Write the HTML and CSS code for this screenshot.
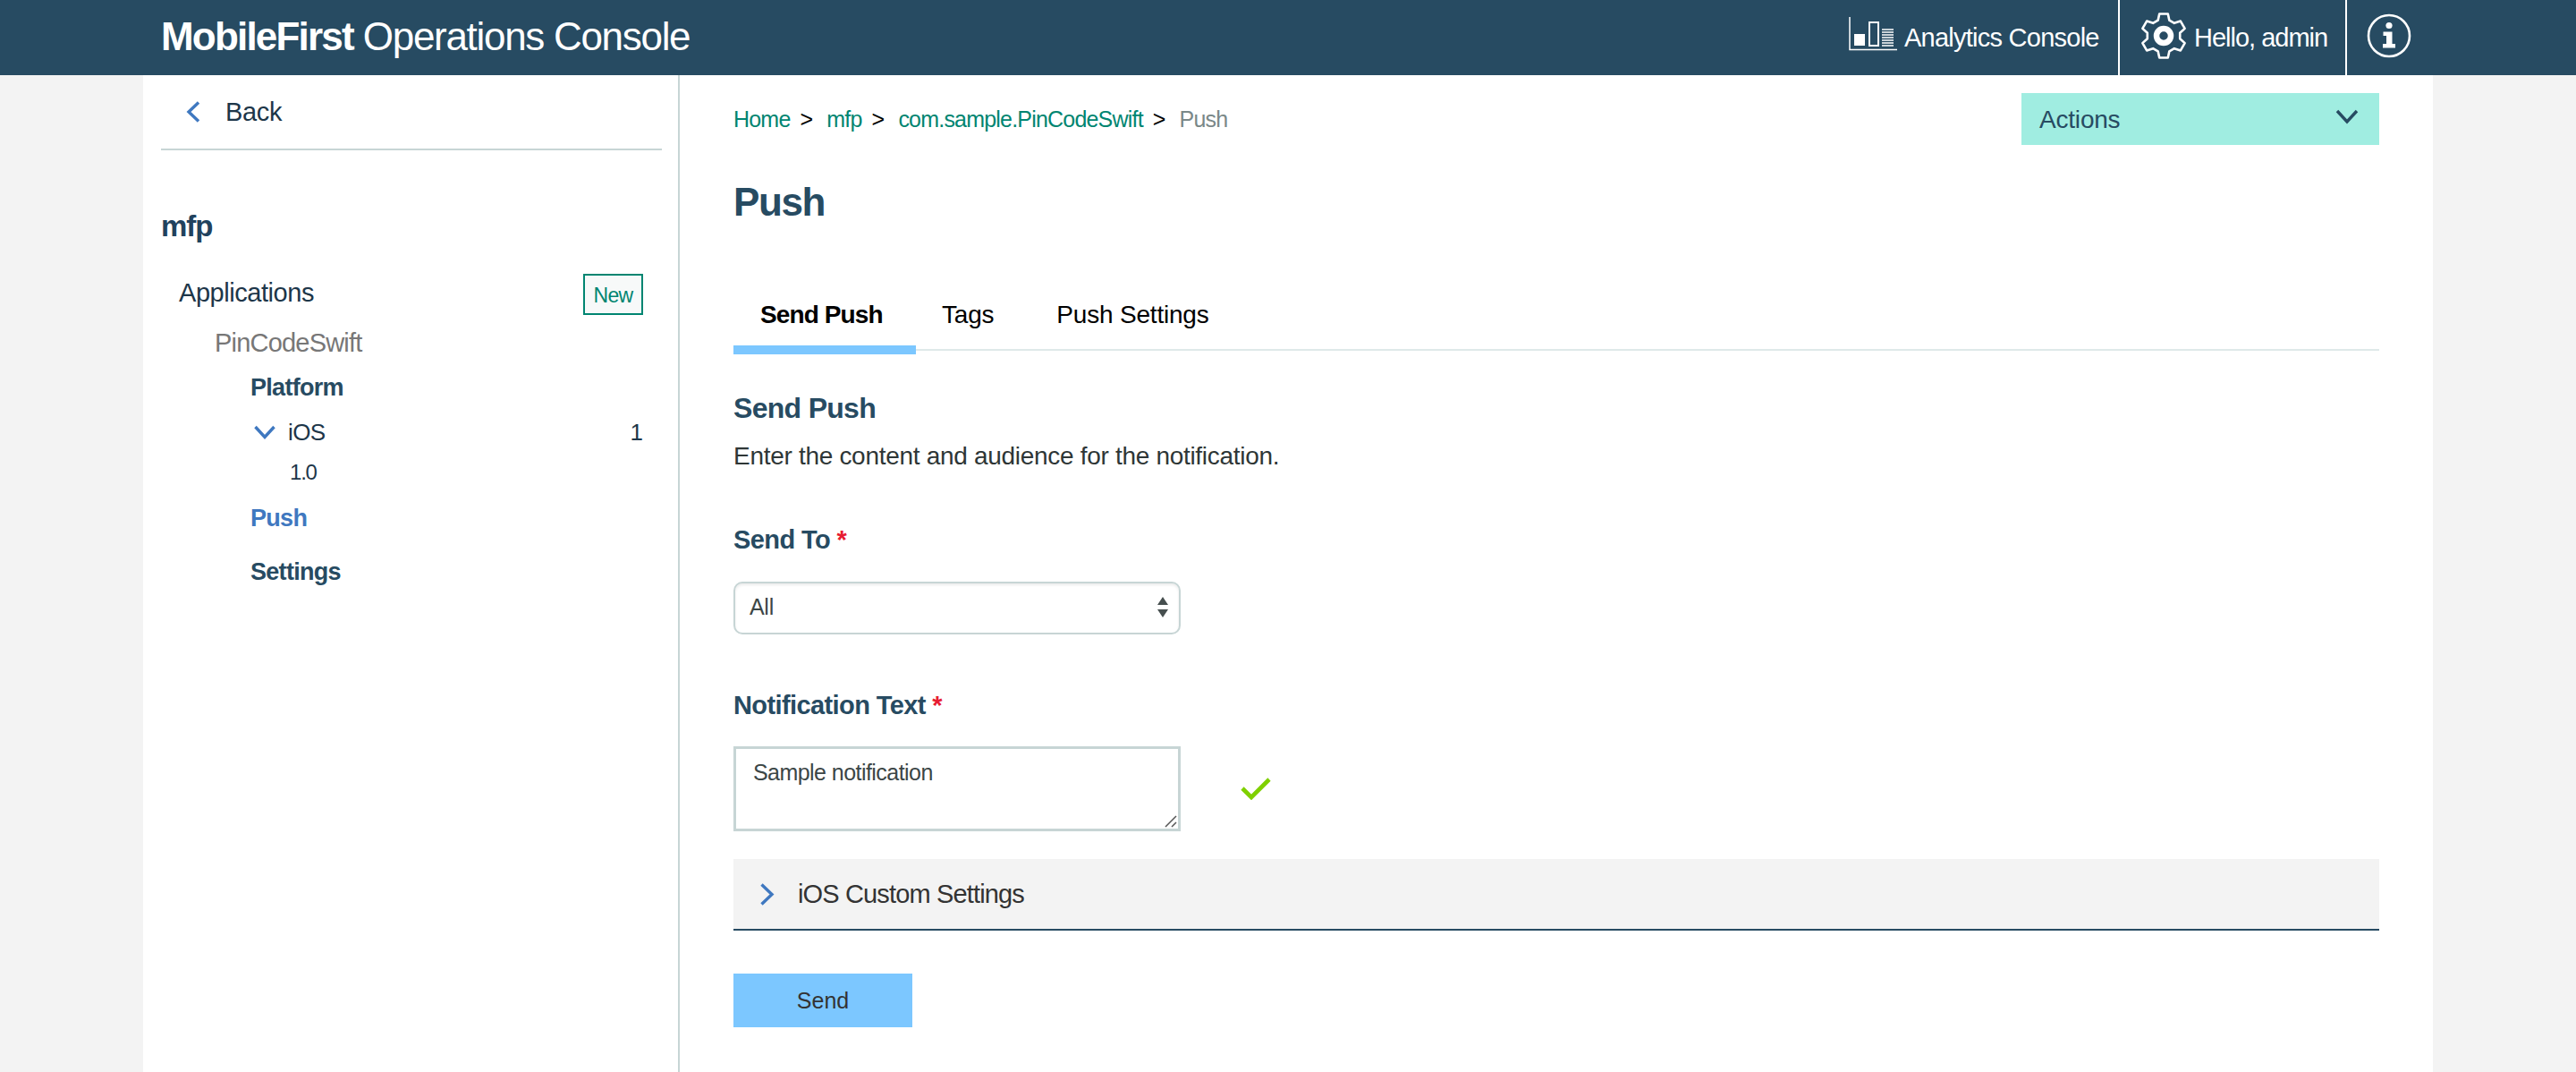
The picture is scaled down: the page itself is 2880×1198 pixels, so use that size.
FILE: index.html
```html
<!DOCTYPE html>
<html lang="en">
<head>
    <meta charset="UTF-8">
    <title>MobileFirst Operations Console</title>
    <link rel="stylesheet" href="styles.css">
</head>
<body>
    <header class="top-bar">
        <div class="brand"><b>MobileFirst</b> Operations Console</div>
        <nav class="top-nav">
            <div class="nav-item nav-analytics">
                <svg class="icon-analytics" width="54" height="38" viewBox="0 0 54 38">
                    <path d="M1 0V36.5H54" fill="none" stroke="#fff" stroke-width="1.5"/>
                    <rect x="6" y="19" width="12" height="13" fill="#fff"/>
                    <rect x="23" y="6" width="10" height="26" fill="none" stroke="#fff" stroke-width="2"/>
                    <path d="M37 14H50M37 17H50M37 20H50M37 23H50M37 26H50M37 29H50M37 32H50" stroke="#fff" stroke-width="1.5"/>
                </svg>
                <span>Analytics Console</span>
            </div>
            <div class="nav-item nav-user">
                <svg class="icon-raised" width="52" height="54" viewBox="0 0 52 54">
                    <polygon fill="none" stroke="#fff" stroke-width="2.6" stroke-linejoin="round" points="19.67,9.61 21.23,2.46 30.77,2.46 32.33,9.61 37.9,12.83 44.87,10.6 49.64,18.86 44.22,23.79 44.22,30.21 49.64,35.14 44.87,43.4 37.9,41.17 32.33,44.39 30.77,51.54 21.23,51.54 19.67,44.39 14.1,41.17 7.13,43.4 2.36,35.14 7.78,30.21 7.78,23.79 2.36,18.86 7.13,10.6 14.1,12.83"/>
                    <circle cx="26" cy="27" r="8" fill="none" stroke="#fff" stroke-width="6.5"/>
                </svg>
                <span>Hello, admin</span>
            </div>
            <div class="nav-item nav-info">
                <svg class="icon-raised" width="50" height="50" viewBox="0 0 50 50">
                    <circle cx="25" cy="25" r="23" fill="none" stroke="#fff" stroke-width="2.6"/>
                    <circle cx="25" cy="13.5" r="3.6" fill="#fff"/>
                    <path d="M18.5 20.5H28.5V34H32V38.5H18V34H22V25H18.5Z" fill="#fff"/>
                </svg>
            </div>
        </nav>
    </header>

    <div class="page">
        <aside class="sidebar">
            <div class="back-row">
                <svg width="16" height="24" viewBox="0 0 16 24">
                    <path d="M14 1.5L3 12L14 22.5" fill="none" stroke="#3f78c0" stroke-width="3.4"/>
                </svg>
                <span>Back</span>
            </div>
            <div class="project-name">mfp</div>
            <div class="apps-row">
                <span class="apps-label">Applications</span>
                <span class="new-btn">New</span>
            </div>
            <div class="tree-app">PinCodeSwift</div>
            <div class="tree-link tree-platform">Platform</div>
            <div class="tree-os">
                <svg width="24" height="16" viewBox="0 0 24 16">
                    <path d="M1.5 2L12 13.5L22.5 2" fill="none" stroke="#3f78c0" stroke-width="3.4"/>
                </svg>
                <span class="os-name">iOS</span>
                <span class="os-count">1</span>
            </div>
            <div class="tree-version">1.0</div>
            <div class="tree-link tree-push">Push</div>
            <div class="tree-link tree-settings">Settings</div>
        </aside>

        <main class="content">
            <div class="crumb-row">
                <div class="crumbs">
                    <a class="crumb-home">Home</a><span class="crumb-sep">&gt;</span>
                    <a class="crumb-mfp">mfp</a><span class="crumb-sep">&gt;</span>
                    <a class="crumb-app">com.sample.PinCodeSwift</a><span class="crumb-sep">&gt;</span>
                    <span class="crumb-current">Push</span>
                </div>
                <div class="actions">
                    <span class="actions-label">Actions</span>
                    <svg width="26" height="17" viewBox="0 0 26 17">
                        <path d="M2 2L13 14L24 2" fill="none" stroke="#274b62" stroke-width="3.4"/>
                    </svg>
                </div>
            </div>

            <h1 class="page-title">Push</h1>

            <div class="tabs">
                <div class="tab tab-active">Send Push</div>
                <div class="tab tab-tags">Tags</div>
                <div class="tab tab-settings">Push Settings</div>
            </div>

            <h2 class="section-title">Send Push</h2>
            <p class="section-text">Enter the content and audience for the notification.</p>

            <label class="field-label label-send">Send To <span class="req">*</span></label>
            <div class="select-box">
                <span>All</span>
                <svg width="12" height="23" viewBox="0 0 12 23">
                    <path d="M6 0L12 9H0ZM0 14H12L6 23Z" fill="#464f4f"/>
                </svg>
            </div>

            <label class="field-label label-text">Notification Text <span class="req">*</span></label>
            <div class="text-row">
                <div class="text-wrap">
                    <textarea class="text-box">Sample notification</textarea>
                    <svg class="grip" width="14" height="14" viewBox="0 0 14 14">
                        <path d="M1 13L13 1M8 13L13 8" fill="none" stroke="#555" stroke-width="1.5"/>
                    </svg>
                </div>
                <svg class="check" width="34" height="25" viewBox="0 0 34 25">
                    <path d="M2 12L12 22L32 2" fill="none" stroke="#7fd000" stroke-width="4.6"/>
                </svg>
            </div>

            <div class="accordion">
                <svg width="17" height="25" viewBox="0 0 17 25">
                    <path d="M2.5 1.5L14 12.5L2.5 23.5" fill="none" stroke="#3f78c0" stroke-width="3.4"/>
                </svg>
                <span>iOS Custom Settings</span>
            </div>

            <button class="send-btn">Send</button>
        </main>
    </div>
</body>
</html>
```

FILE: styles.css
```css
html, body {
    height: 100%;
}
body {
    margin: 0;
    background: #f3f3f3;
    font-family: "Liberation Sans", Arial, sans-serif;
    overflow: hidden;
}
svg {
    display: block;
    flex-shrink: 0;
}

/* top bar */
.top-bar {
    display: flex;
    align-items: center;
    height: 84px;
    padding-left: 180px;
    background: #274b62;
    color: #fff;
}
.brand {
    padding-bottom: 3px;
    font-size: 44px;
    letter-spacing: -1.3px;
}
.brand b {
    letter-spacing: -1.8px;
}
.top-nav {
    display: flex;
    height: 84px;
    margin-left: auto;
    font-size: 29px;
}
.nav-item {
    display: flex;
    align-items: center;
}
.nav-analytics {
    gap: 8px;
    width: 301px;
    letter-spacing: -0.75px;
}
.nav-user {
    gap: 8px;
    width: 254px;
    padding-left: 23px;
    box-sizing: border-box;
    border-left: 2px solid #fff;
    letter-spacing: -1px;
}
.nav-info {
    width: 258px;
    padding-left: 22px;
    box-sizing: border-box;
    border-left: 2px solid #fff;
}
.icon-analytics {
    margin-bottom: 8px;
}
.icon-raised {
    margin-bottom: 5px;
}

/* page */
.page {
    display: flex;
    width: 2560px;
    height: 1114px;
    margin: 0 auto;
    background: #fff;
}

/* sidebar */
.sidebar {
    width: 600px;
    box-sizing: border-box;
    padding: 0 18px 0 20px;
    border-right: 2px solid #c7d5d5;
    color: #1d3649;
    font-size: 29px;
}
.back-row {
    display: flex;
    align-items: center;
    gap: 28px;
    height: 82px;
    padding-left: 28px;
    border-bottom: 2px solid #c7d5d5;
    font-size: 29px;
    letter-spacing: -0.3px;
}
.project-name {
    margin-top: 65px;
    font-size: 33px;
    line-height: 40px;
    font-weight: bold;
    letter-spacing: -1px;
    color: #21425e;
}
.apps-row {
    display: flex;
    align-items: center;
    justify-content: space-between;
    height: 46px;
    margin-top: 33px;
    padding: 0 21px 0 20px;
    letter-spacing: -0.45px;
}
.apps-label {
    margin-bottom: 4px;
}
.new-btn {
    width: 67px;
    height: 46px;
    box-sizing: border-box;
    border: 2px solid #008571;
    background: #f7f9f9;
    color: #008571;
    font-size: 23px;
    line-height: 44px;
    letter-spacing: -0.6px;
    text-align: center;
}
.tree-app {
    margin-top: 11px;
    padding-left: 60px;
    line-height: 40px;
    color: #777;
    letter-spacing: -0.8px;
}
.tree-link {
    padding-left: 100px;
    font-size: 27px;
    line-height: 40px;
    font-weight: bold;
    letter-spacing: -0.7px;
    color: #274b62;
}
.tree-platform {
    margin-top: 10px;
}
.tree-os {
    display: flex;
    align-items: center;
    height: 40px;
    margin-top: 10px;
    padding: 0 21px 0 104px;
    font-size: 26px;
}
.os-name {
    margin-left: 14px;
    letter-spacing: -0.6px;
}
.os-count {
    margin-left: auto;
}
.tree-version {
    margin-top: 10px;
    padding-left: 144px;
    font-size: 24px;
    line-height: 30px;
    letter-spacing: -1.2px;
}
.tree-push {
    margin-top: 16px;
    color: #3f78c0;
}
.tree-settings {
    margin-top: 20px;
}

/* main content */
.content {
    flex: 1;
    padding: 20px 60px 0 60px;
}
.crumb-row {
    display: flex;
    align-items: center;
    justify-content: space-between;
    height: 58px;
}
.crumbs {
    display: flex;
    align-items: center;
    font-size: 25px;
    letter-spacing: -0.8px;
    color: #008571;
}
.crumb-sep {
    color: #000;
    margin: 0 16px 0 11px;
}
.crumb-current {
    color: #7a8888;
}
.actions {
    display: flex;
    align-items: center;
    justify-content: space-between;
    width: 400px;
    height: 58px;
    box-sizing: border-box;
    padding: 0 23px 0 20px;
    background: #a0ede1;
    color: #274b62;
    font-size: 28px;
    letter-spacing: -0.2px;
}
.actions-label {
    padding-top: 2px;
}
.actions svg {
    margin-bottom: 5px;
}
.page-title {
    margin: 39px 0 0;
    font-size: 44px;
    line-height: 50px;
    letter-spacing: -1.4px;
    color: #274b62;
}
.tabs {
    display: flex;
    height: 74px;
    margin-top: 65px;
    border-bottom: 2px solid #dfe9e9;
    font-size: 28px;
    letter-spacing: -0.2px;
    color: #000;
}
.tab {
    height: 80px;
    box-sizing: border-box;
    line-height: 72px;
}
.tab-active {
    width: 204px;
    padding-left: 30px;
    border-bottom: 10px solid #7cc7ff;
    font-weight: bold;
    letter-spacing: -0.9px;
}
.tab-tags {
    margin-left: 29px;
}
.tab-settings {
    margin-left: 70px;
}
.section-title {
    margin: 44px 0 0;
    font-size: 32px;
    line-height: 40px;
    letter-spacing: -0.7px;
    color: #274b62;
}
.section-text {
    margin: 14px 0 0;
    font-size: 28px;
    line-height: 40px;
    letter-spacing: -0.3px;
    color: #2e3636;
}
.field-label {
    display: block;
    font-size: 29px;
    line-height: 40px;
    font-weight: bold;
    letter-spacing: -0.6px;
    color: #274b62;
}
.req {
    color: #e71d32;
}
.label-send {
    margin-top: 53px;
}
.select-box {
    display: flex;
    align-items: center;
    justify-content: space-between;
    width: 500px;
    height: 59px;
    box-sizing: border-box;
    margin-top: 27px;
    padding: 0 12px 2px 16px;
    border: 2px solid #c7d5d5;
    border-radius: 10px;
    box-shadow: inset 0 2px 3px rgba(0,0,0,0.08);
    color: #3c4646;
    font-size: 25px;
    letter-spacing: -0.3px;
}
.label-text {
    margin-top: 59px;
}
.text-row {
    display: flex;
    align-items: center;
    margin-top: 26px;
}
.text-wrap {
    position: relative;
    width: 500px;
    height: 95px;
}
.text-box {
    display: block;
    width: 500px;
    height: 95px;
    box-sizing: border-box;
    margin: 0;
    padding: 11px 19px;
    border: 3px solid #c7d5d5;
    border-radius: 0;
    outline: none;
    resize: none;
    color: #3c4646;
    font-family: "Liberation Sans", Arial, sans-serif;
    font-size: 25px;
    line-height: 30px;
    letter-spacing: -0.55px;
}
.grip {
    position: absolute;
    right: 4px;
    bottom: 4px;
}
.check {
    margin-left: 67px;
}
.accordion {
    display: flex;
    align-items: center;
    gap: 26px;
    height: 80px;
    box-sizing: border-box;
    margin-top: 31px;
    padding-left: 29px;
    background: #f3f3f3;
    border-bottom: 2px solid #274b62;
    color: #333;
    font-size: 29px;
    letter-spacing: -0.85px;
}
.send-btn {
    display: block;
    width: 200px;
    height: 60px;
    margin-top: 48px;
    padding: 0;
    border: 0;
    background: #7cc7ff;
    color: #333;
    font-family: "Liberation Sans", Arial, sans-serif;
    font-size: 25px;
}
```
